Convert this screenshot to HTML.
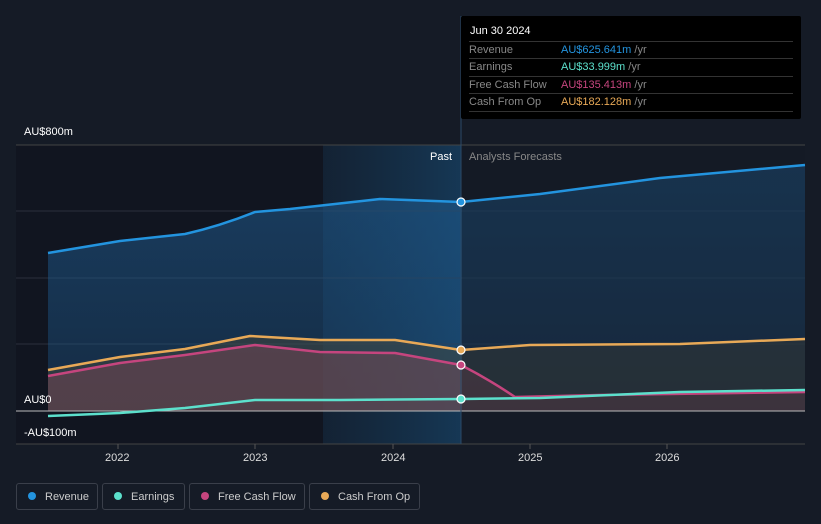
<!DOCTYPE html>
<html><head><meta charset="utf-8"><style>
body{margin:0;width:821px;height:524px;background:#151b26;font-family:"Liberation Sans",sans-serif;overflow:hidden;position:relative}
.lbl{position:absolute;color:#fff;font-size:11px}
.tip{position:absolute;left:461px;top:16px;width:340px;height:103px;background:#000;border-radius:2px}
.tip .h{position:absolute;left:9px;top:9px;color:#fff;font-size:11px}
.row{position:absolute;left:8px;width:324px;border-top:1px solid #333;height:17px;font-size:11px;color:#888;line-height:17px}
.row span{position:absolute;left:92px}
.row i{font-style:normal;color:#888}
.leg{position:absolute;top:483px;height:27px;border:1px solid #3a3f4a;border-radius:3px;color:#ccc;font-size:11px;line-height:27px;box-sizing:border-box}
.leg b{display:inline-block;width:8px;height:8px;border-radius:50%;margin:0 9px 0 11px;vertical-align:-0px}
</style></head><body>
<svg width="821" height="524" style="position:absolute;left:0;top:0">
<defs>
<linearGradient id="rv" x1="0" y1="0" x2="0" y2="1"><stop offset="0" stop-color="#1f5f96" stop-opacity=".55"/><stop offset="1" stop-color="#1f5f96" stop-opacity=".3"/></linearGradient>
<linearGradient id="hl" x1="0" y1="0" x2="1" y2="0"><stop offset="0" stop-color="#1a4a70" stop-opacity=".25"/><stop offset="1" stop-color="#1a5a8a" stop-opacity=".5"/></linearGradient>
</defs>
<rect x="16" y="145" width="445" height="299" fill="#111520"/>
<rect x="323" y="145" width="138" height="299" fill="url(#hl)"/>
<g stroke="#2a303b" stroke-width="1">
<line x1="16" y1="145" x2="805" y2="145" stroke="#444"/>
<line x1="16" y1="211" x2="805" y2="211"/><line x1="16" y1="278" x2="805" y2="278"/><line x1="16" y1="344" x2="805" y2="344"/>
<line x1="16" y1="444" x2="805" y2="444" stroke="#444"/>
</g>
<path d="M48,253 L120,241 L185,234 Q220,226 255,212 L290,209 L380,199 L461,202 L540,194 L660,178 L805,165 L805,411 L48,411Z" fill="url(#rv)"/>
<path d="M48,370 L120,357 L185,349 L250,336 L320,340 L395,340 L461,350 L530,345 L680,344 L805,339 L805,411 L48,411Z" fill="#4a4a3a" opacity=".45"/>
<path d="M48,376 L120,363 L185,355 L255,345 L320,352 L395,353 L461,365 Q490,380 515,397 L600,395 L805,392 L805,411 L48,411Z" fill="#8a4a5a" opacity=".4"/>
<rect x="462" y="146" width="343" height="265" fill="#151b26" opacity=".35"/>
<line x1="16" y1="411" x2="805" y2="411" stroke="#bbb" stroke-width="1"/>
<line x1="461" y1="16" x2="461" y2="444" stroke="#2b4a68"/>
<g fill="none" stroke-width="2.5" stroke-linejoin="round">
<path d="M48,253 L120,241 L185,234 Q220,226 255,212 L290,209 L380,199 L461,202 L540,194 L660,178 L805,165" stroke="#2394df"/>
<path d="M48,370 L120,357 L185,349 L250,336 L320,340 L395,340 L461,350 L530,345 L680,344 L805,339" stroke="#e8a957"/>
<path d="M48,376 L120,363 L185,355 L255,345 L320,352 L395,353 L461,365 Q490,380 515,397 L600,395 L805,392" stroke="#c5457e"/>
<path d="M48,416 L120,413 L185,408 L255,400 L340,400 L461,399 L540,398 L680,392 L805,390" stroke="#5ce0cc"/>
</g>
<g stroke="#fff" stroke-width="1.2">
<circle cx="461" cy="202" r="4" fill="#2394df"/><circle cx="461" cy="350" r="4" fill="#e8a957"/>
<circle cx="461" cy="365" r="4" fill="#c5457e"/><circle cx="461" cy="399" r="4" fill="#5ce0cc"/>
</g>
<g stroke="#555"><line x1="118" y1="444" x2="118" y2="449"/><line x1="255" y1="444" x2="255" y2="449"/><line x1="393" y1="444" x2="393" y2="449"/><line x1="530" y1="444" x2="530" y2="449"/><line x1="667" y1="444" x2="667" y2="449"/></g>
</svg>
<div class="lbl" style="left:24px;top:126px">AU$800m</div>
<div class="lbl" style="left:24px;top:394px">AU$0</div>
<div class="lbl" style="left:24px;top:427px">-AU$100m</div>
<div class="lbl" style="left:430px;top:151px">Past</div>
<div class="lbl" style="left:469px;top:151px;color:#888">Analysts Forecasts</div>
<div class="lbl" style="left:105px;top:452px;color:#ddd">2022</div>
<div class="lbl" style="left:243px;top:452px;color:#ddd">2023</div>
<div class="lbl" style="left:381px;top:452px;color:#ddd">2024</div>
<div class="lbl" style="left:518px;top:452px;color:#ddd">2025</div>
<div class="lbl" style="left:655px;top:452px;color:#ddd">2026</div>
<div class="tip"><div class="h">Jun 30 2024</div>
<div class="row" style="top:25px">Revenue<span style="color:#2394df">AU$625.641m <i>/yr</i></span></div>
<div class="row" style="top:42px">Earnings<span style="color:#5ce0cc">AU$33.999m <i>/yr</i></span></div>
<div class="row" style="top:60px">Free Cash Flow<span style="color:#c5457e">AU$135.413m <i>/yr</i></span></div>
<div class="row" style="top:77px">Cash From Op<span style="color:#e8a957">AU$182.128m <i>/yr</i></span></div>
<div class="row" style="top:95px;height:0"></div>
</div>
<div class="leg" style="left:16px;width:82px"><b style="background:#2394df"></b>Revenue</div>
<div class="leg" style="left:102px;width:83px"><b style="background:#5ce0cc"></b>Earnings</div>
<div class="leg" style="left:189px;width:116px"><b style="background:#c5457e"></b>Free Cash Flow</div>
<div class="leg" style="left:309px;width:111px"><b style="background:#e8a957"></b>Cash From Op</div>
</body></html>
